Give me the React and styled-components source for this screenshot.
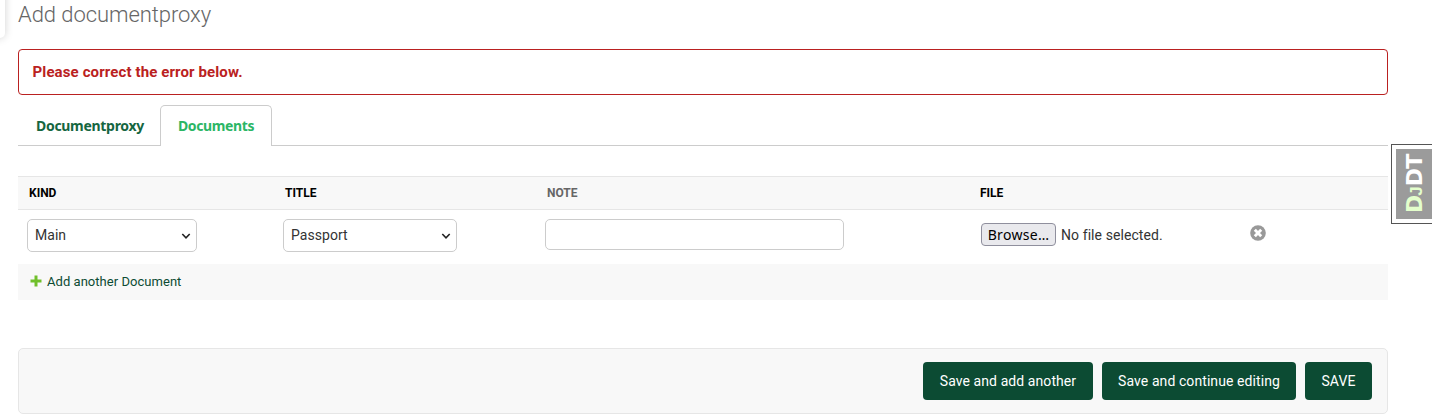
import React from "react";
import styled, { createGlobalStyle } from "styled-components";

const GlobalStyle = createGlobalStyle`
  *, *::before, *::after { box-sizing: border-box; }
  body {
    margin: 0;
    background: #fff;
    color: #333;
    font-family: Roboto, "Liberation Sans", sans-serif;
    font-size: 14px;
    overflow: hidden;
  }
`;

const Page = styled.main`
  width: 1432px;
  height: 418px;
  padding: 0 44px 0 18px;
  position: relative;
  overflow: hidden;
`;

const SidebarEdge = styled.div`
  position: absolute;
  left: -20px;
  top: -20px;
  width: 25px;
  height: 58px;
  border-radius: 0 0 5px 0;
  background: #fff;
  box-shadow: 0 0 9px rgba(0, 0, 0, 0.18);
`;

const Title = styled.h1`
  margin: 0;
  height: 49px;
  padding-top: 2px;
  font-size: 22px;
  line-height: 26px;
  font-weight: 300;
  letter-spacing: -0.07px;
  color: #666;
  white-space: nowrap;
`;

const ErrorNote = styled.p`
  margin: 0;
  height: 46px;
  padding: 0 13.5px;
  border: 1px solid #ba2121;
  border-radius: 4px;
  color: #ba2121;
  font-size: 15px;
  line-height: 44px;
  font-weight: 700;
  letter-spacing: 0.12px;
`;

const Tabs = styled.nav`
  display: flex;
  height: 41px;
  margin-top: 10px;
  box-shadow: inset 0 -1px #ccc;
`;

const Tab = styled.a`
  width: ${(p) => p.$width}px;
  padding-left: ${(p) => (p.$active ? 17 : 18)}px;
  line-height: ${(p) => (p.$active ? 40 : 42)}px;
  border: ${(p) => (p.$active ? "1px solid #ccc" : "none")};
  border-bottom: 0;
  border-radius: 5px 5px 0 0;
  background: ${(p) => (p.$active ? "#fff" : "transparent")};
  color: ${(p) => (p.$active ? "#2bb665" : "#156641")};
  font-family: "Noto Sans", sans-serif;
  font-size: 14px;
  font-weight: 700;
  letter-spacing: ${(p) => p.$spacing}px;
  white-space: nowrap;
`;

const columns = "256px 262px 433px 270px 1fr";

const HeaderRow = styled.div`
  display: grid;
  grid-template-columns: ${columns};
  height: 34px;
  margin-top: 30px;
  padding-left: 11px;
  border: solid #e6e6e6;
  border-width: 1px 0;
  background: #f8f8f8;
`;

const HeaderCell = styled.div`
  color: ${(p) => (p.$muted ? "#666" : "#000")};
  font-size: 12px;
  line-height: 32px;
  font-weight: 700;
`;

const FormRow = styled.div`
  display: grid;
  grid-template-columns: ${columns};
  align-items: start;
  height: 54px;
  padding: 9px 0 0 9px;
`;

const Select = styled.div`
  display: flex;
  justify-content: space-between;
  width: ${(p) => p.$width}px;
  height: 33px;
  padding: 0 5px 0 7px;
  border: 1px solid #ccc;
  border-radius: 5px;
  color: #333;
  font-size: 14px;
  line-height: 30px;
  letter-spacing: 0.04px;

  svg { margin-top: 13px; }
`;

const TextInput = styled.input`
  width: 299px;
  height: 31px;
  border: 1px solid #ccc;
  border-radius: 5px;
  background: #fff;
`;

const FileField = styled.div`
  display: flex;
  align-items: center;
  gap: 5px;
  height: 31px;
  padding-left: 3px;
  font-size: 14px;
  letter-spacing: 0.08px;
`;

const Browse = styled.button`
  width: 75px;
  height: 23px;
  padding: 0;
  border: 1px solid #8f8f9d;
  border-radius: 4px;
  background: #e9e9ed;
  color: #000;
  font: 14px/20px "Noto Sans", sans-serif;
  letter-spacing: 0.3px;
`;

const DeleteLink = styled.a`
  display: block;
  height: 16px;
  margin: 6px 0 0 2px;
`;

const AddRow = styled.div`
  display: flex;
  gap: 5px;
  height: 36px;
  padding-left: 12px;
  background: #f8f8f8;
  color: #0c4b33;
  font-size: 13px;
  line-height: 35px;
  letter-spacing: 0.04px;

  svg { margin-top: 11px; }
`;

const SubmitRow = styled.div`
  display: flex;
  justify-content: flex-end;
  gap: 9px;
  height: 66px;
  margin-top: 48px;
  padding: 13px 15px;
  border: 1px solid #e6e6e6;
  border-radius: 5px;
  background: #f8f8f8;
`;

const Submit = styled.button`
  width: ${(p) => p.$width}px;
  height: 38px;
  padding: 0;
  border: 0;
  border-radius: 4px;
  background: #0c4b33;
  color: #fff;
  font: 14px Roboto, sans-serif;
  letter-spacing: 0.08px;
`;

const ToolbarHandle = styled.aside`
  position: absolute;
  left: 1391px;
  top: 144px;
  width: 60px;
  height: 80px;
  padding: 4px;
  border: 1px solid #555;
  background: #fff;
`;

const ToolbarLabel = styled.div`
  display: flex;
  align-items: center;
  justify-content: center;
  width: 52px;
  height: 70px;
  padding-left: 13px;
  background: #9b9b9b;
  color: #fff;
  font: 700 22px/22px "DejaVu Sans", sans-serif;
  letter-spacing: -0.9px;
  writing-mode: vertical-rl;
  text-orientation: sideways;
  transform: rotate(180deg);
`;

const Green = styled.span`
  color: #e4ffcc;
`;

const SmallGreen = styled(Green)`
  font-family: "Liberation Sans", sans-serif;
  font-size: 17px;
  letter-spacing: 0;
`;

const Chevron = () => (
  <svg width="10" height="6" viewBox="0 0 10 6" fill="none" stroke="#222" strokeWidth="1.6">
    <path d="M1.3 1l3.7 3.8 3.7-3.8" />
  </svg>
);

export default function App() {
  return (
    <Page>
      <GlobalStyle />
      <SidebarEdge />
      <Title>Add documentproxy</Title>
      <ErrorNote>Please correct the error below.</ErrorNote>
      <Tabs>
        <Tab $width={142} $spacing={-0.3}>Documentproxy</Tab>
        <Tab $width={112} $spacing={-0.38} $active>Documents</Tab>
      </Tabs>
      <HeaderRow>
        <HeaderCell>KIND</HeaderCell>
        <HeaderCell>TITLE</HeaderCell>
        <HeaderCell $muted>NOTE</HeaderCell>
        <HeaderCell>FILE</HeaderCell>
      </HeaderRow>
      <FormRow>
        <Select $width={170}>Main<Chevron /></Select>
        <Select $width={174}>Passport<Chevron /></Select>
        <TextInput />
        <FileField>
          <Browse>Browse…</Browse>
          No file selected.
        </FileField>
        <DeleteLink>
          <svg width="16" height="16" viewBox="0 0 16 16">
            <circle cx="8" cy="8" r="7.8" fill="#999" />
            <path d="M4.8 4.8l6.4 6.4M11.2 4.8l-6.4 6.4" stroke="#fff" strokeWidth="2.9" />
          </svg>
        </DeleteLink>
      </FormRow>
      <AddRow>
        <svg width="12" height="12" viewBox="0 0 12 12">
          <path d="M6 .5v11M.5 6h11" stroke="#70bf2b" strokeWidth="3" />
        </svg>
        Add another Document
      </AddRow>
      <SubmitRow>
        <Submit $width={170}>Save and add another</Submit>
        <Submit $width={194}>Save and continue editing</Submit>
        <Submit $width={67}>SAVE</Submit>
      </SubmitRow>
      <ToolbarHandle>
        <ToolbarLabel>
          <span><Green>D</Green><SmallGreen>J</SmallGreen>DT</span>
        </ToolbarLabel>
      </ToolbarHandle>
    </Page>
  );
}
